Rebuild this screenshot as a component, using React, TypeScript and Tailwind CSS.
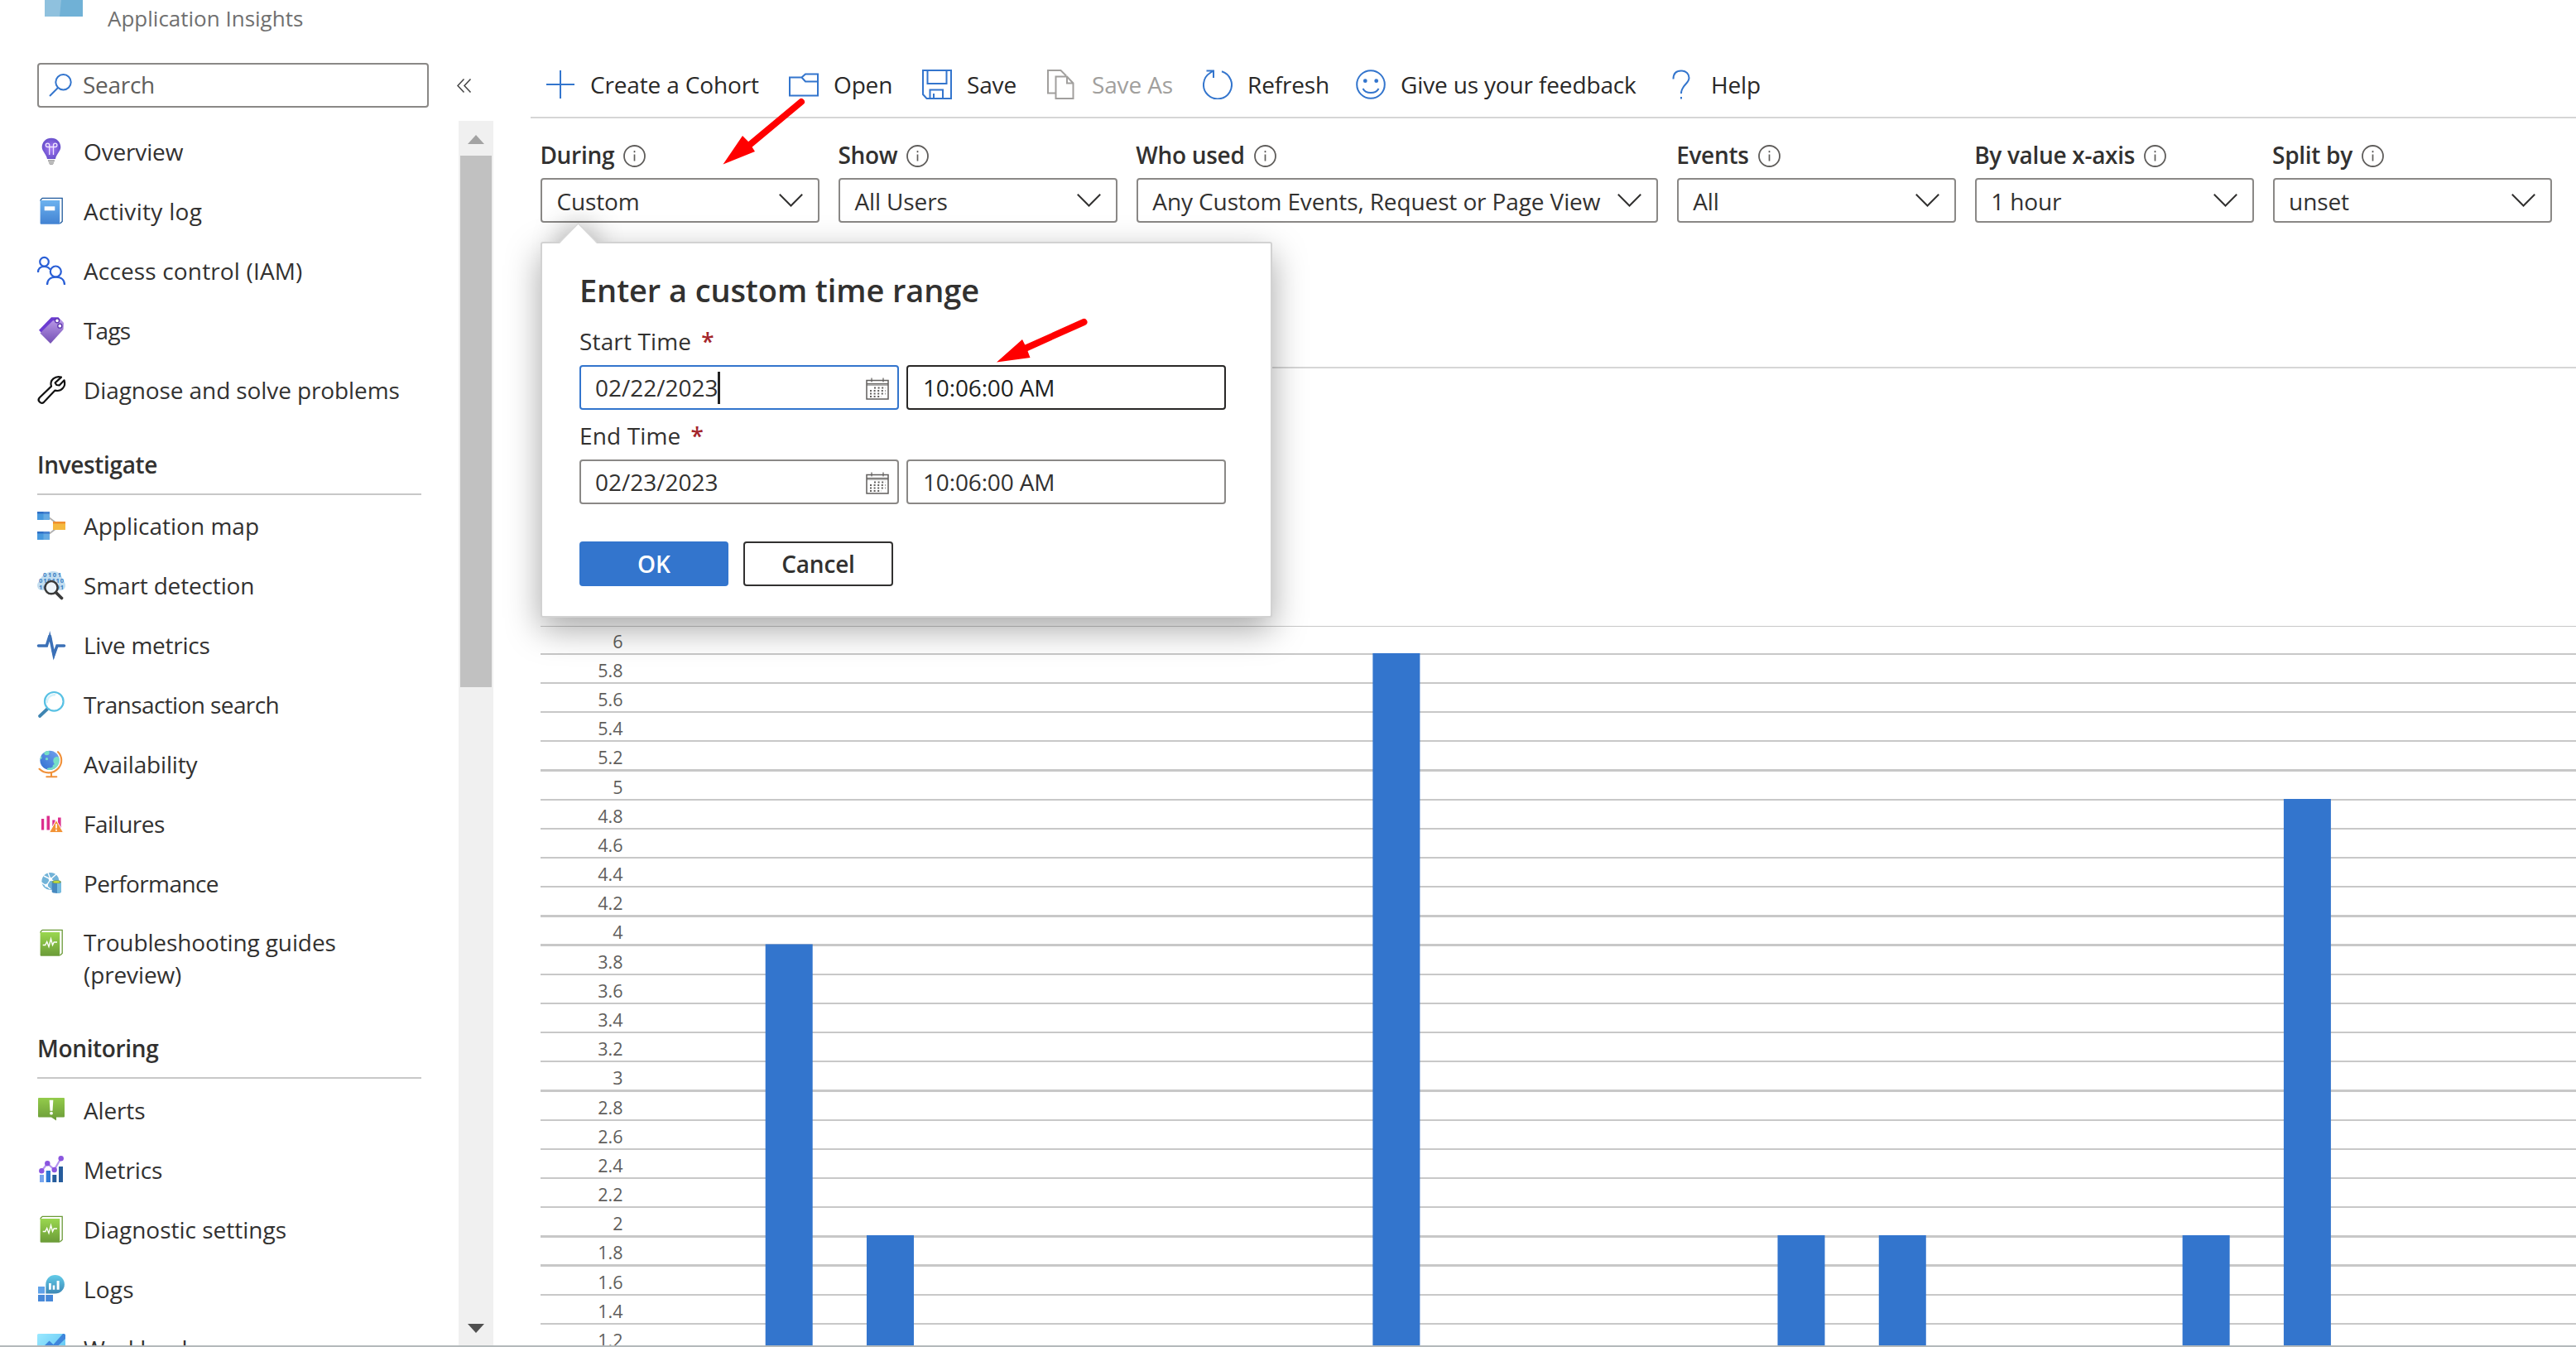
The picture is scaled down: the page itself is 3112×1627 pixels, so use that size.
import type { ReactNode } from 'react'

const BLUE = '#3375cd'

/* ---------- Sidebar icons (34 x 34) ---------- */

const Icon = ({ children }: { children: ReactNode }) => (
  <svg className="w-[34px] h-[34px] shrink-0 overflow-visible" viewBox="0 0 34 34" fill="none">
    {children}
  </svg>
)

const BulbIcon = () => (
  <Icon>
    <defs>
      <radialGradient id="bulb" cx="0.5" cy="0.5" r="0.6">
        <stop offset="0" stopColor="#a67af4" />
        <stop offset="1" stopColor="#5d48c4" />
      </radialGradient>
    </defs>
    <path d="M17 .7C10.5 .7 5.7 5.5 5.7 11.8c0 5 5.3 8.2 6.3 14.2h10c1-6 6.3-9.2 6.3-14.2C28.3 5.5 23.5 .7 17 .7z" fill="url(#bulb)" />
    <path d="M13 27h8v2l-1 1v1.5l-1.5 1.5h-3L14 31.5V30l-1-1z" fill="#a9a9a9" />
    <path d="M13 29h8M14 31h6" stroke="#dcdcdc" strokeWidth="0.7" />
    <path d="M14.7 21V9.3a2.2 2.2 0 1 0-2.2 2.2h9.2a2.2 2.2 0 1 0-2.2-2.2V21" stroke="#f0e6ff" strokeWidth="1.3" />
  </Icon>
)

const BookIcon = ({ id, from, to, edge, pulse }: { id: string; from: string; to: string; edge: string; pulse?: boolean }) => (
  <Icon>
    <defs>
      <linearGradient id={id} x1="0" y1="0" x2="0" y2="1">
        <stop offset="0" stopColor={from} />
        <stop offset="1" stopColor={to} />
      </linearGradient>
    </defs>
    <path d="M4.2 5V3.2L6.2 1.3H30.2V29.5L27.5 32" stroke={edge} strokeWidth="1.3" />
    <path d="M3.6 4H27.2V32.7H4.6a1 1 0 0 1-1-1z" fill={`url(#${id})`} />
    {pulse ? (
      <path d="M6.7 19.5h3l2-4 2.3 6 2.5-9.5 2 7.5 1.7-3.5H24" stroke="#fff" strokeWidth="1.4" />
    ) : (
      <rect x="8.7" y="11.3" width="12.6" height="5" fill="#fff" />
    )}
  </Icon>
)

const PeopleIcon = () => (
  <Icon>
    <g stroke="#2a5fd6" strokeWidth="2.2">
      <circle cx="8.5" cy="6.2" r="5.3" />
      <path d="M1 19C1 14.5 4 12 8.5 12c3 0 5.5 1 7 3.5" />
      <circle cx="22.3" cy="18" r="6.5" />
      <path d="M12 34c0-6 4-9.3 10.4-9.3S33 28 33 34" />
    </g>
  </Icon>
)

const TagsIcon = () => (
  <Icon>
    <defs>
      <linearGradient id="tag" x1="0" y1="0" x2="0" y2="1">
        <stop offset="0" stopColor="#b796e6" />
        <stop offset="1" stopColor="#7450b4" />
      </linearGradient>
    </defs>
    <path d="M2 16.8 17 1.3h8.5l3 3.5L6 21z" fill="#6b3bd1" />
    <path d="M3.5 20.5 18.8 5.2 29 4.5l3 3.5-.5 8L16 33z" fill="url(#tag)" />
    <circle cx="24" cy="5.3" r="2.5" fill="#fff" stroke="#5a32ac" strokeWidth="1.3" />
    <circle cx="27.3" cy="11.7" r="2.5" fill="#fff" stroke="#5a32ac" strokeWidth="1.3" />
  </Icon>
)

const WrenchIcon = () => (
  <Icon>
    <path
      d="M29 1.6C22-.6 14.5 5 17 12.6L2.8 26.2C-.6 29.8 4.6 35 8.2 31.6L21.5 17.6C29 19.6 35 13 32.6 5.3L26.6 11.4 23.3 11 21.6 8.4z"
      stroke="#111"
      strokeWidth="2.2"
      strokeLinejoin="round"
    />
  </Icon>
)

const AppMapIcon = () => (
  <Icon>
    <path d="M14 7l8 6M14 27l8-6" stroke="#b0b0b0" strokeWidth="1.8" />
    <path d="M0 0h15v10H0zM0 24h15v10H0z" fill="#4799de" />
    <path d="M7.5 0H15v10H7.5zM7.5 24H15v10H7.5z" fill="#67abe2" />
    <path d="M0 0h15v2.5H0zM0 24h15v2.5H0z" fill="#2f70c6" />
    <path d="M7.5 0H15v2.5H7.5zM7.5 24H15v2.5H7.5z" fill="#4a84d0" />
    <path d="M19 12h15v10H19z" fill="#f5b93f" />
    <path d="M19 12h15v2.5H19z" fill="#ef8f2f" />
  </Icon>
)

const SmartIcon = () => (
  <Icon>
    <path d="M6 23C2 23 0 20 0 17c0-3 2-5 4-5.5C4 6 8 4 10 4c2-3 6-4 9-4 6 0 10 3 11 8 0 2 4 5 4 9s-3 6-6 6z" fill="#c3def0" />
    <g fontFamily="Open Sans, sans-serif" fontWeight="700" fontSize="7.5" fill="#3a7fc4">
      <text x="7" y="6.6" textLength="22">0101</text>
      <text x="2" y="14.4" textLength="30">010110</text>
      <text x="2" y="22" textLength="30">100101</text>
    </g>
    <circle cx="17" cy="19.7" r="7.6" fill="#eef5fa" stroke="#3a3a3a" strokeWidth="2.5" />
    <path d="M23 26l6.5 6.5" stroke="#3a3a3a" strokeWidth="3.8" strokeLinecap="round" />
  </Icon>
)

const PulseIcon = () => (
  <Icon>
    <path d="M1.5 18H11.3L15.2 5.5 20 29 24 18h8.5" stroke="#3b70b7" strokeWidth="3.6" strokeLinecap="round" />
    <path d="M12.5 12 15.2 0 18 12zM17.5 24 20 34 23 24z" fill="#3b70b7" />
  </Icon>
)

const LensIcon = () => (
  <Icon>
    <path d="M12.5 22 3 31" stroke="#3f85b2" strokeWidth="3.8" strokeLinecap="round" />
    <circle cx="20.3" cy="13.3" r="11.3" fill="#fff" stroke="#58c1e4" strokeWidth="2.2" />
    <path d="M11.5 15c0-5 3-9.5 10.5-10" stroke="#d3f1fa" strokeWidth="2.5" />
  </Icon>
)

const GlobeIcon = () => (
  <Icon>
    <defs>
      <linearGradient id="globe" x1="0" y1="1" x2="1" y2="0">
        <stop offset="0" stopColor="#2f6fd0" />
        <stop offset="1" stopColor="#76a3ee" />
      </linearGradient>
      <clipPath id="globeClip">
        <circle cx="15" cy="12.3" r="11.6" />
      </clipPath>
    </defs>
    <circle cx="15" cy="12.3" r="11.6" fill="url(#globe)" />
    <g clipPath="url(#globeClip)" fill="#77dfc6">
      <circle cx="11.5" cy="3" r="3.2" />
      <circle cx="11.5" cy="10.7" r="1.6" />
      <circle cx="3.5" cy="9" r="2.2" />
      <path d="M20 10c3-3 6-2 7 0v8c-2 3-4 6-8 7-4 .5-8-1-7-3 3-1 5 0 7-2-1-1 0-2 2-3-2-2-2-5-1-7z" />
    </g>
    <path d="M25 2.2C30 7 31 16 25.5 22 19 29 9 29 2.5 22.8" stroke="#f0913a" strokeWidth="2.1" strokeLinecap="round" />
    <path d="M17 27v5M11.3 32.2h12" stroke="#f0913a" strokeWidth="2.1" strokeLinecap="round" />
  </Icon>
)

const FailuresIcon = () => (
  <Icon>
    <path d="M5 11h3.2v13.5H5zM11.5 7.5H15v17h-3.5zM18.3 12.5h3.3V24h-3.3zM25 9.5h3.6V24H25z" fill="#dc2f8e" />
    <path d="M23 12.5 31.5 27.6h-17z" fill="#f29335" stroke="#fff" strokeWidth="1" />
    <path d="M23 17v5.5M23 23.7v2" stroke="#fff" strokeWidth="1.7" />
  </Icon>
)

const PerformanceIcon = () => (
  <Icon>
    <circle cx="16" cy="14.5" r="10.6" fill="#72b3d8" />
    <path d="M8 8l8 4 7-6M16 12l-5 8-6-4M11 20l5 4M16 12l8 5M13 4l3 8" stroke="#fff" strokeWidth="1.4" />
    <circle cx="16" cy="12" r="2.3" fill="#fff" />
    <circle cx="11" cy="19.5" r="2" fill="#fff" />
    <path d="M17.7 15.5h11.3V27c0 2.5-11.3 2.5-11.3 0z" fill="#4789bf" />
    <path d="M24 15.5h5V27c0 1.3-2 1.9-5 1.9z" fill="#76bce0" />
    <ellipse cx="23.3" cy="15.2" rx="5.4" ry="1.9" fill="#7a9d52" />
    <ellipse cx="23.3" cy="15.2" rx="3.8" ry="1.2" fill="#c6df3c" />
  </Icon>
)

const AlertsIcon = () => (
  <Icon>
    <defs>
      <linearGradient id="alert" x1="0" y1="0" x2="0" y2="1">
        <stop offset="0" stopColor="#93cb4b" />
        <stop offset="1" stopColor="#6a9a38" />
      </linearGradient>
    </defs>
    <path d="M2 2h30a1 1 0 0 1 1 1v21.5a1 1 0 0 1-1 1h-9v4L17 25.5H2a1 1 0 0 1-1-1V3a1 1 0 0 1 1-1z" fill="url(#alert)" />
    <path d="M14.7 4.7h4.6l-.8 13h-3z" fill="#fff" />
    <circle cx="17" cy="20.7" r="1.9" fill="#fff" />
  </Icon>
)

const MetricsIcon = () => (
  <Icon>
    <path d="M3 23h5v9H3z" fill="#76a4ee" />
    <path d="M10.7 18H16v14h-5.3z" fill="#2f78d4" />
    <path d="M18.3 23h5v9h-5zM26 13h5v19h-5z" fill="#265c9c" />
    <path d="M5.3 18.3l7-9 8.3 7.5 8-13.5" stroke="#b393f0" strokeWidth="2.2" />
    <g fill="#8b56df">
      <circle cx="5.3" cy="18.3" r="3.2" />
      <circle cx="12.3" cy="9.3" r="3.2" />
      <circle cx="20.7" cy="17" r="3.2" />
      <circle cx="28.7" cy="3.2" r="3.2" />
    </g>
  </Icon>
)

const LogsIcon = () => (
  <Icon>
    <defs>
      <linearGradient id="logs" x1="0" y1="0" x2="0" y2="1">
        <stop offset="0" stopColor="#62cce9" />
        <stop offset="1" stopColor="#3c87b4" />
      </linearGradient>
    </defs>
    <path d="M1 14h8v8.5H1z" fill="#60a3e8" />
    <path d="M1 24h8v8H1zM10.2 24H19v8h-8.8z" fill="#4688d8" />
    <path d="M10.3 22.6V11.3A11.3 11.3 0 1 1 21.6 22.6z" fill="url(#logs)" />
    <path d="M14 10h2.8v7.7H14zM18.7 12.5h2.6v5.3h-2.6zM23.6 7h3v10.8h-3z" fill="#fff" />
  </Icon>
)

const WorkbooksIcon = () => (
  <Icon>
    <defs>
      <linearGradient id="wb" x1="0" y1="0" x2="1" y2="1">
        <stop offset="0" stopColor="#9be9ff" />
        <stop offset="1" stopColor="#52bdf0" />
      </linearGradient>
    </defs>
    <rect y="-1" width="34" height="34" rx="1.5" fill="url(#wb)" />
    <path d="M0 22 14.5 7.5l5 4.5L31 -1h1.5L34 .5V5L19.5 19l-5-4L0 30z" fill="#3f86dc" />
  </Icon>
)

/* ---------- Toolbar icons (36 x 36) ---------- */

const ToolIcon = ({ color = BLUE, children }: { color?: string; children: ReactNode }) => (
  <svg className="w-9 h-9 shrink-0" viewBox="0 0 36 36" fill="none" stroke={color} strokeWidth="2">
    {children}
  </svg>
)

const tools = [
  { label: 'Create a Cohort', box: 'w-[294px]', color: BLUE, icon: <path d="M18 1v34M1 18h34" /> },
  { label: 'Open', box: 'w-[161px]', color: BLUE, icon: <path d="M1 9.5H15.5L20 5.5H35V31.5H1zM15.5 9.5 20 14.5H35" /> },
  {
    label: 'Save',
    box: 'w-[151px]',
    color: BLUE,
    icon: <path d="M1 1H35V35H5.5L1 30zM6.5 1V17H29.5V1M9.5 35V24.5H25V35M14 29V35" />,
  },
  {
    label: 'Save As',
    box: 'w-[188px]',
    color: '#a19f9d',
    icon: <path d="M10.5 28.5H1V1H16.5L23 7.5M10.5 8.5H24L31.5 16.5V35H10.5zM24 8.5V16.5H31.5" />,
  },
  {
    label: 'Refresh',
    box: 'w-[185px]',
    color: BLUE,
    icon: <path d="M23 2.2A17 17 0 1 1 9 4L13 1.5M4.5 1.5H13V10" />,
  },
  {
    label: 'Give us your feedback',
    box: 'w-[375px]',
    color: BLUE,
    icon: (
      <>
        <circle cx="18" cy="18" r="16.8" />
        <circle cx="11.3" cy="13.7" r="1.4" fill={BLUE} />
        <circle cx="24.7" cy="13.7" r="1.4" fill={BLUE} />
        <path d="M8.5 23C12 29.8 24 29.8 27.5 23" />
      </>
    ),
  },
  {
    label: 'Help',
    box: 'w-[140px]',
    color: BLUE,
    icon: (
      <>
        <path d="M8.5 11.5C8.5 5 12 1.5 18 1.5S27.5 5.2 27.5 10C27.5 17.5 18 18.5 18 29" />
        <path d="M18 33v2.5" />
      </>
    ),
  },
]

/* ---------- Data ---------- */

const overview = [
  { label: 'Overview', icon: <BulbIcon /> },
  { label: 'Activity log', icon: <BookIcon id="activity" from="#6cb2ef" to="#4282d2" edge="#1f5a9c" />, tracking: 'tracking-[0.3px]' },
  { label: 'Access control (IAM)', icon: <PeopleIcon />, tracking: 'tracking-[0.15px]' },
  { label: 'Tags', icon: <TagsIcon />, tracking: 'tracking-[-0.8px]' },
  { label: 'Diagnose and solve problems', icon: <WrenchIcon />, tracking: 'tracking-[-0.1px]' },
]

const investigate = [
  { label: 'Application map', icon: <AppMapIcon />, tracking: 'tracking-[0px]' },
  { label: 'Smart detection', icon: <SmartIcon /> },
  { label: 'Live metrics', icon: <PulseIcon />, tracking: 'tracking-[-0.25px]' },
  { label: 'Transaction search', icon: <LensIcon />, tracking: 'tracking-[-0.6px]' },
  { label: 'Availability', icon: <GlobeIcon /> },
  { label: 'Failures', icon: <FailuresIcon />, tracking: 'tracking-[-0.5px]' },
  { label: 'Performance', icon: <PerformanceIcon />, tracking: 'tracking-[-0.6px]' },
]

const monitoring = [
  { label: 'Alerts', icon: <AlertsIcon /> },
  { label: 'Metrics', icon: <MetricsIcon /> },
  { label: 'Diagnostic settings', icon: <BookIcon id="diag" from="#9ad74f" to="#6b9b38" edge="#6b9b38" pulse />, tracking: 'tracking-[0px]' },
  { label: 'Logs', icon: <LogsIcon />, tracking: 'tracking-[0.2px]' },
  { label: 'Workbooks', icon: <WorkbooksIcon /> },
]

const filters = [
  { label: 'During', value: 'Custom', box: 'w-[336.4px]' },
  { label: 'Show', value: 'All Users', box: 'w-[336.4px]' },
  { label: 'Who used', value: 'Any Custom Events, Request or Page View', box: 'w-[629.2px]' },
  { label: 'Events', value: 'All', box: 'w-[336.4px]' },
  { label: 'By value x-axis', value: '1 hour', box: 'w-[336.4px]' },
  { label: 'Split by', value: 'unset', box: 'w-[336.4px]' },
]

// y position and thickness of each grid line, measured from the chart's top
const gridLines = [
  [34, 2], [69, 2], [104, 2], [139, 2], [174, 3], [210, 2], [245, 2], [280, 2],
  [315, 2], [350, 3], [385, 3], [421, 2], [456, 2], [491, 2], [526, 2], [561, 3],
  [597, 2], [632, 2], [667, 2], [702, 2], [737, 3], [772, 3], [808, 2], [843, 2], [878, 2],
]

const bars = [
  { slot: 0, top: 385.5 },
  { slot: 1, top: 737 },
  { slot: 6, top: 34 },
  { slot: 10, top: 737 },
  { slot: 11, top: 737 },
  { slot: 14, top: 737 },
  { slot: 15, top: 210 },
]

/* ---------- Pieces ---------- */

const NavRow = ({ label, icon, tracking = 'tracking-[-0.15px]' }: { label: string; icon: ReactNode; tracking?: string }) => (
  <a className="flex items-center h-[72px]">
    {icon}
    <span className={`ml-[22px] whitespace-nowrap ${tracking}`}>{label}</span>
  </a>
)

const SectionTitle = ({ children }: { children: ReactNode }) => (
  <h2 className="w-[464px] pt-[34px] pb-[15px] mb-px border-b-2 border-[#c8c8c8] leading-10 font-semibold tracking-[-0.35px]">
    {children}
  </h2>
)

const Sidebar = () => (
  <aside className="w-[596px] shrink-0 flex flex-col">
    <div className="h-[76px] shrink-0 pl-[54px] flex items-start">
      <svg className="w-[46px] h-5" viewBox="0 0 46 20">
        <path d="M0 0h46v20H0z" fill="#70b1d6" />
        <path d="M0 0h20l-2 20H0z" fill="#8fc1de" />
      </svg>
      <span className="ml-[30px] mt-1 text-[26px] leading-9 text-[#707070]">Application Insights</span>
    </div>

    <div className="h-[54px] shrink-0 pl-[45px] flex items-center">
      <div className="w-[473px] h-[54px] border-2 border-[#8a8886] rounded-[4px] flex items-center pl-3">
        <svg className="w-7 h-7" viewBox="0 0 28 28" fill="none" stroke={BLUE} strokeWidth="2">
          <circle cx="17.5" cy="10.3" r="9.2" />
          <path d="M11 17 1 27" />
        </svg>
        <span className="ml-[13px] -mt-0.5 text-[#605e5c] tracking-[-0.3px]">Search</span>
      </div>
      <svg className="w-[18px] h-[17px] ml-[34px]" viewBox="0 0 18 17" fill="none" stroke="#444" strokeWidth="1.5">
        <path d="M8.5 .5 1 8.5l7.5 8M16.5 .5 9 8.5l7.5 8" />
      </svg>
    </div>

    <div className="mt-4 flex-1 min-h-0 flex">
      <nav className="w-[554px] pl-[45px] pt-px overflow-hidden">
        {overview.map((item) => (
          <NavRow key={item.label} {...item} />
        ))}

        <SectionTitle>Investigate</SectionTitle>
        {investigate.map((item) => (
          <NavRow key={item.label} {...item} />
        ))}
        <a className="flex items-start h-[109px] pt-4">
          <div className="mt-[3px]">
            <BookIcon id="guides" from="#9ad74f" to="#6b9b38" edge="#6b9b38" pulse />
          </div>
          <span className="ml-[22px] w-[360px] leading-[39px] tracking-[-0.12px]">Troubleshooting guides (preview)</span>
        </a>

        <SectionTitle>Monitoring</SectionTitle>
        <div className="mt-0.5">
          {monitoring.map((item) => (
            <NavRow key={item.label} {...item} />
          ))}
        </div>
      </nav>

      {/* Scrollbar */}
      <div className="w-[42px] bg-[#f0f0f0] flex flex-col items-center">
        <svg className="w-5 h-[11px] mt-[17px] shrink-0" viewBox="0 0 20 11">
          <path d="M10 0 20 11H0z" fill="#a3a3a3" />
        </svg>
        <div className="w-[38px] h-[642px] mt-[14px] bg-[#c1c1c1]" />
        <svg className="w-5 h-[11px] mt-auto mb-[15px] shrink-0" viewBox="0 0 20 11">
          <path d="M0 0h20L10 11z" fill="#505050" />
        </svg>
      </div>
    </div>
  </aside>
)

const Toolbar = () => (
  <div className="ml-[45px] h-[143px] pt-[62px] pl-[18px] border-b-2 border-[#d6d6d6] flex items-center">
    {tools.map((tool) => (
      <button key={tool.label} className={`flex items-center shrink-0 ${tool.box}`}>
        <ToolIcon color={tool.color}>{tool.icon}</ToolIcon>
        <span
          className={`ml-[18px] whitespace-nowrap tracking-[-0.15px] ${
            tool.label === 'Save As' ? 'text-[#a19f9d]' : 'text-[#292827]'
          }`}
        >
          {tool.label}
        </span>
      </button>
    ))}
  </div>
)

const InfoIcon = () => (
  <svg className="w-[27px] h-[27px] mt-[3px]" viewBox="0 0 27 27" fill="none" stroke="#605e5c">
    <circle cx="13.5" cy="13.5" r="12.5" strokeWidth="1.8" />
    <path d="M13.5 11.5v8M13.5 7v2.2" strokeWidth="1.7" />
  </svg>
)

const Filters = () => (
  <div className="pl-[57.4px] pt-6 flex gap-[23.6px]">
    {filters.map((filter) => (
      <div key={filter.label} className={`shrink-0 ${filter.box}`}>
        <div className="h-10 -ml-px flex items-center gap-[11px] font-semibold tracking-[-0.3px]">
          {filter.label}
          <InfoIcon />
        </div>
        <div className="mt-2 h-[54px] border-2 border-[#8a8886] rounded-[4px] pl-[17px] pr-[18px] flex items-center justify-between">
          <span className="mt-0.5 whitespace-nowrap tracking-[-0.12px]">{filter.value}</span>
          <svg className="w-[29px] h-4 shrink-0" viewBox="0 0 29 16" fill="none" stroke="#323130" strokeWidth="2">
            <path d="M.8 .8 14.5 14.5 28.2 .8" />
          </svg>
        </div>
      </div>
    ))}
  </div>
)

const CalendarIcon = () => (
  <svg className="w-7 h-7 mt-1" viewBox="0 0 28 28" fill="none" stroke="#605e5c">
    <path d="M1 3.5h26v22.5H1z" strokeWidth="1.5" />
    <path d="M1 9h26M1 7.5h26M7 .5v5M21 .5v5" strokeWidth="1.2" />
    <path d="M10 12.5h14M5 16h19M5 19.5h19M5 23h14" strokeWidth="1.8" strokeDasharray="2 2.6" />
  </svg>
)

const TimeRow = ({ label, date, time, active }: { label: string; date: string; time: string; active?: boolean }) => (
  <>
    <label className="flex gap-3 h-10 -mt-px tracking-[0.15px]">
      {label}
      <span className="font-semibold text-[#a4262c]">*</span>
    </label>
    <div className="mt-[9px] flex gap-[9px]">
      <div
        className={`w-[386px] h-[54px] border-2 rounded-[4px] pl-[17px] pr-2.5 flex items-center ${
          active ? 'border-[#3375cd]' : 'border-[#8a8886]'
        }`}
      >
        <span>{date}</span>
        {active && <span className="w-[3px] h-[39px] -ml-px bg-[#222]" />}
        <span className="ml-auto">
          <CalendarIcon />
        </span>
      </div>
      <div
        className={`w-[386px] h-[54px] border-2 rounded-[4px] pl-[18px] flex items-center tracking-[-0.15px] ${
          active ? 'border-[#292827] text-[#201f1e]' : 'border-[#8a8886]'
        }`}
      >
        {time}
      </div>
    </div>
  </>
)

const TimeRangeCallout = () => (
  <div className="absolute left-[653px] top-[292px] w-[884px] h-[454px]">
    <div className="absolute left-[29px] -top-[15px] w-[33px] h-[33px] rotate-45 bg-white shadow-[0_0_36px_rgba(0,0,0,0.45)]" />
    <div className="relative w-full h-full bg-white border-2 border-[#d2d2d2] bg-clip-padding rounded-[3px] pl-[45px] pt-[31px] shadow-[0_14px_42px_rgba(0,0,0,0.35)]">
      <h3 className="text-[38px] leading-[50px] font-semibold tracking-[-0.1px] mb-[18px]">
        Enter a custom time range
      </h3>
      <TimeRow label="Start Time" date="02/22/2023" time="10:06:00 AM" active />
      <div className="h-3" />
      <TimeRow label="End Time" date="02/23/2023" time="10:06:00 AM" />
      <div className="mt-[45px] flex gap-[18px] font-semibold">
        <button className="w-[180px] h-[54px] rounded-[4px] bg-[#3375cd] text-white">OK</button>
        <button className="w-[181px] h-[54px] rounded-[4px] border-2 border-[#323130] tracking-[-0.2px]">Cancel</button>
      </div>
    </div>
    {/* Beak tip drawn over the top border */}
    <svg className="absolute left-[22px] -top-[23px] w-[47px] h-[26px]" viewBox="0 0 47 26">
      <path d="M0 26 23.5 1.5 47 26z" fill="#fff" />
      <path d="M1 24 23.5 1 46 24" fill="none" stroke="#d8d8d8" strokeWidth="1.3" />
    </svg>
  </div>
)

const Chart = () => (
  <svg className="ml-[57px] mt-[310px] w-[2459px] h-[870px] shrink-0" viewBox="0 0 2459 870">
    <rect y="1" width="2459" height="1" fill="#c8c8c8" />
    {gridLines.map(([y, h]) => (
      <rect key={y} y={y} width="2459" height={h} fill="#c8c8c8" />
    ))}
    {gridLines.map(([y], i) => (
      <text key={y} x="99.5" y={y - 6.5} textAnchor="end" fontSize="21.5" fill="#605e5c">
        {Number((6 - i * 0.2).toFixed(1))}
      </text>
    ))}
    {bars.map((bar) => (
      <rect key={bar.slot} x={271.7 + bar.slot * 122.28} y={bar.top} width="57" height={870 - bar.top} fill={BLUE} />
    ))}
  </svg>
)

const Arrows = () => (
  <svg className="absolute left-[860px] top-[110px] w-[470px] h-[340px]" viewBox="860 110 470 340" fill="#f00">
    <path d="M968 123 905 175.5M1309.5 389 1236 422" stroke="#f00" strokeWidth="8" strokeLinecap="round" />
    <path d="M873.5 198.5 897 164 905 172 912 183zM1204 437.5 1235 410 1240 420 1244.5 432z" />
  </svg>
)

const App = () => (
  <div className="relative w-[3112px] h-[1627px] overflow-hidden bg-white flex flex-col font-['Open_Sans','Noto_Sans',sans-serif] text-[28px] leading-10 text-[#323130]">
    <div className="flex-1 min-h-0 flex">
      <Sidebar />
      <main className="flex-1 min-w-0 flex flex-col overflow-hidden">
        <Toolbar />
        <Filters />
        <div className="ml-[57px] mt-[174px] h-0.5 shrink-0 bg-[#d6d6d6]" />
        <Chart />
      </main>
    </div>
    <div className="h-0.5 shrink-0 bg-[#b4b9bb]" />

    <TimeRangeCallout />
    <Arrows />
  </div>
)

export default App
